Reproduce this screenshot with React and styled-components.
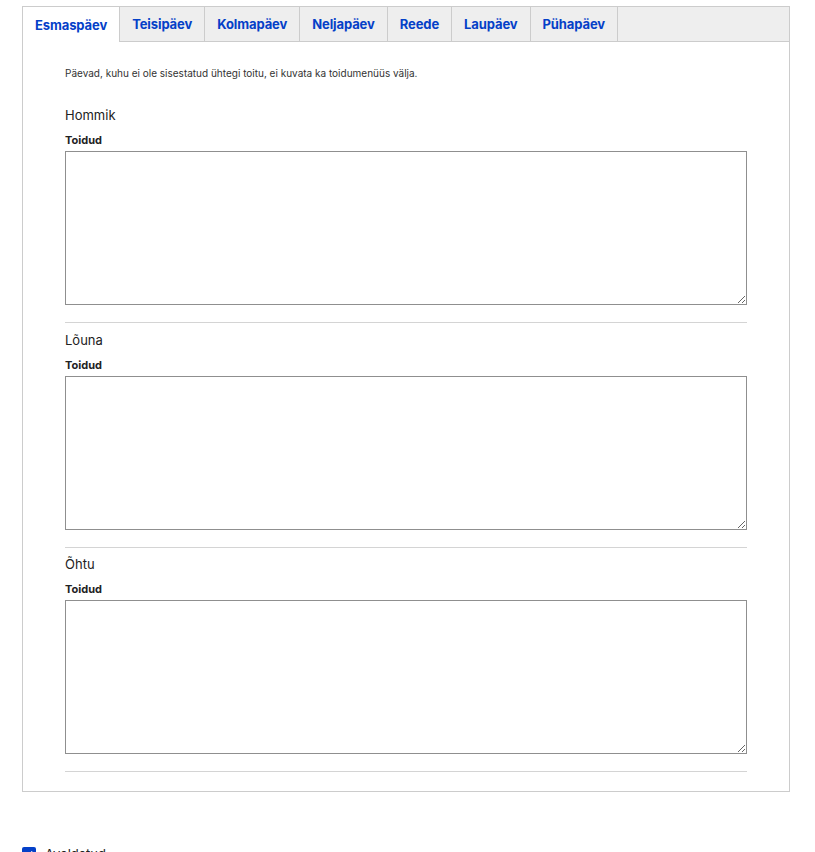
import React from 'react';
import styled, { createGlobalStyle } from 'styled-components';

const GlobalStyle = createGlobalStyle`
  body {
    margin: 0;
    background: #fff;
    font-family: Inter, "Liberation Sans", sans-serif;
    color: #222;
  }
`;

const Page = styled.div`
  padding: 6px 25px 0 22px;
`;

const Panel = styled.div`
  border: 1px solid #ccc;
`;

const TabBar = styled.div`
  display: flex;
  background: #eee;
  border-bottom: 1px solid #ccc;
  height: 34px;
`;

const Tab = styled.div`
  display: flex;
  align-items: center;
  padding: 0 12px;
  border-right: 1px solid #ccc;
  font-size: 13px;
  font-weight: 700;
  letter-spacing: -0.1px;
  color: #0440c8;
  background: ${({ active }) => (active ? '#fff' : 'transparent')};
  margin-bottom: ${({ active }) => (active ? '-1px' : '0')};
  cursor: pointer;
`;

const Content = styled.div`
  padding: 24px 42px 19px;
`;

const Intro = styled.p`
  margin: 0 0 26px;
  font-size: 10px;
  line-height: 14px;
  color: #333;
`;

const Section = styled.div`
  border-bottom: 1px solid #d4d4d4;
  padding-bottom: 17px;
  & + & {
    padding-top: 7.5px;
  }
`;

const SectionTitle = styled.div`
  font-size: 13px;
  line-height: 18px;
  margin-bottom: 9px;
`;

const Label = styled.label`
  display: block;
  font-size: 11px;
  font-weight: 700;
  line-height: 14px;
  margin-bottom: 4px;
`;

const TextArea = styled.textarea`
  display: block;
  box-sizing: border-box;
  width: 100%;
  height: 154px;
  margin: 0;
  border: 1px solid #8f8f8f;
  border-radius: 0;
  resize: vertical;
  font-family: inherit;
  font-size: 13px;
`;

const Footer = styled.div`
  display: flex;
  align-items: center;
  gap: 9px;
  margin-top: 54px;
  font-size: 13px;
`;

const Check = styled.span`
  width: 14px;
  height: 14px;
  border-radius: 2px;
  background: #0440c8;
  display: flex;
  align-items: center;
  justify-content: center;
`;

const days = ['Esmaspäev', 'Teisipäev', 'Kolmapäev', 'Neljapäev', 'Reede', 'Laupäev', 'Pühapäev'];
const meals = ['Hommik', 'Lõuna', 'Õhtu'];

export default function App() {
  return (
    <Page>
      <GlobalStyle />
      <Panel>
        <TabBar>
          {days.map((d, i) => (
            <Tab key={d} active={i === 0}>{d}</Tab>
          ))}
        </TabBar>
        <Content>
          <Intro>Päevad, kuhu ei ole sisestatud ühtegi toitu, ei kuvata ka toidumenüüs välja.</Intro>
          {meals.map((m) => (
            <Section key={m}>
              <SectionTitle>{m}</SectionTitle>
              <Label>Toidud</Label>
              <TextArea />
            </Section>
          ))}
        </Content>
      </Panel>
      <Footer>
        <Check>
          <svg width="10" height="10" viewBox="0 0 10 10">
            <path d="M2 5.2 L4.2 7.4 L8.2 2.6" stroke="#fff" strokeWidth="1.6" fill="none" />
          </svg>
        </Check>
        <span>Avaldatud</span>
      </Footer>
    </Page>
  );
}
